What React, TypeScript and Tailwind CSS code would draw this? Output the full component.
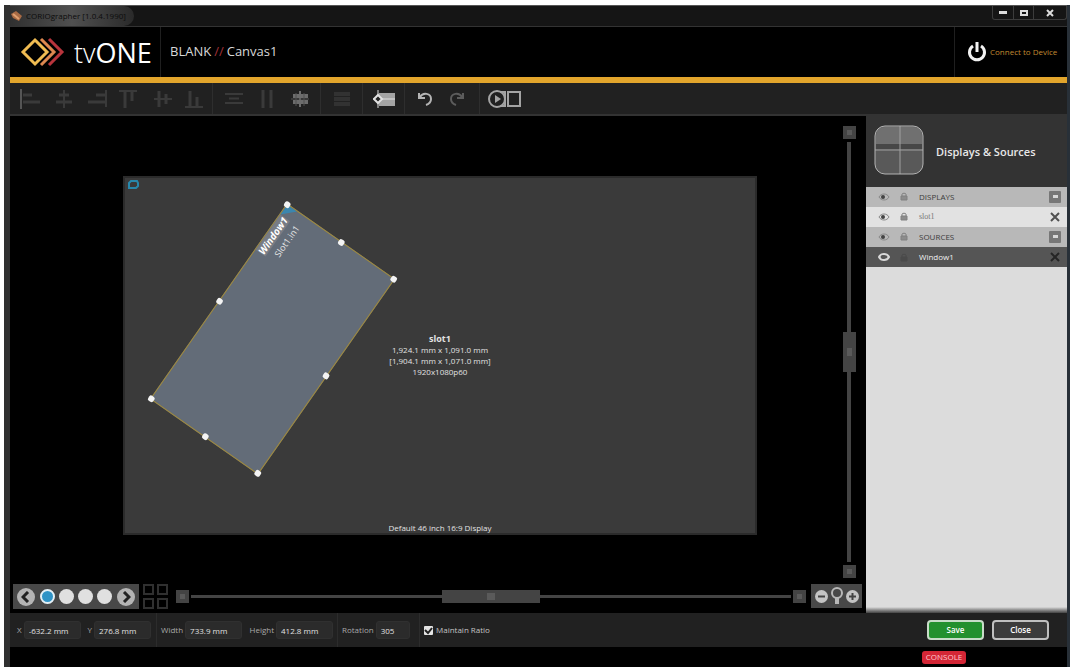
import type { ReactNode } from 'react';
import clsx from 'clsx';

const handles = [
  '-left-[3px] -top-[3px]',
  'left-[116px] -top-[3px]',
  '-right-[3px] -top-[3px]',
  '-left-[3px] -bottom-[3px]',
  'left-[116px] -bottom-[3px]',
  '-right-[3px] -bottom-[3px]',
  '-left-[3px] top-[63px]',
  '-right-[3px] top-[63px]',
];

function Tool({ label, color, wide, children }: { label: string; color: string; wide?: boolean; children: ReactNode }) {
  return (
    <button aria-label={label} className={clsx('flex h-full items-center justify-center', wide ? 'w-10' : 'w-[33px]', color)}>
      <svg
        width={wide ? 34 : 22}
        height="20"
        viewBox={wide ? '0 0 34 20' : '0 0 22 20'}
        fill="none"
        stroke="currentColor"
        strokeWidth="2"
      >
        {children}
      </svg>
    </button>
  );
}

function Toolbar() {
  const dim = 'text-[#3a3a3a]';
  const group = 'flex h-full border-r border-[#2e2e2e] px-1';
  return (
    <div className="flex h-[33px] items-center border-b-2 border-[#333] bg-[#212121]">
      <div className="flex h-full border-r border-[#2e2e2e] pl-1">
        <Tool label="Align left" color={dim}>
          <path d="M1 0v20" stroke="#555" />
          <path d="M3 6h9M3 13h17" strokeWidth="3" />
        </Tool>
        <Tool label="Align center" color={dim}>
          <path d="M11 1v18" />
          <path d="M6 6h10M3 13h16" strokeWidth="3" />
        </Tool>
        <Tool label="Align right" color={dim}>
          <path d="M20 1v17" />
          <path d="M10 6h9M2 13h17" strokeWidth="3" />
        </Tool>
        <Tool label="Align top" color={dim}>
          <path d="M0 2h18" />
          <path d="M6 3v16M13 3v9" strokeWidth="3" />
        </Tool>
        <Tool label="Align middle" color={dim}>
          <path d="M2 10h18" />
          <path d="M7 2v16M14 5v10" strokeWidth="3" />
        </Tool>
        <Tool label="Align bottom" color={dim}>
          <path d="M0 18h18" />
          <path d="M5 2v15M12 8v9" strokeWidth="3" />
        </Tool>
      </div>
      <div className={group}>
        <Tool label="Match width" color={dim}>
          <path d="M2 5h18M2 14h18M6 9.5h10" />
        </Tool>
        <Tool label="Match height" color={dim}>
          <path d="M7 1v18M15 1v18" strokeWidth="3" />
        </Tool>
        <Tool label="Match size" color="text-[#6c6c6c]">
          <path d="M4 7h15M4 13h15" strokeWidth="4" />
          <path d="M11 2v16" />
          <path d="M2 10h18M7 4v13M15 4v13" stroke="#505050" strokeWidth="1" />
        </Tool>
      </div>
      <div className={group}>
        <Tool label="Tile" color="text-[#323232]">
          <path d="M3 5h16M3 10h16M3 15h16" strokeWidth="4" />
        </Tool>
      </div>
      <div className={group}>
        <Tool label="Snap" color="text-[#e0e0e0]">
          <path d="M6 4h16v13H6z" fill="#a4a4a4" stroke="none" />
          <path d="M5 1v18M0 10h22" strokeWidth="1" />
          <path d="M1 10l4-4 4 4-4 4z" fill="#212121" />
        </Tool>
      </div>
      <div className={group}>
        <Tool label="Undo" color="text-[#b4b4b4]">
          <path d="M4 4v5h6M5 8c3-5 11-4 11 2 0 3-2 5-5 6" />
        </Tool>
        <Tool label="Redo" color="text-[#5c5c5c]">
          <path d="M15 4v5H9M14 8C11 3 3 4 3 10c0 3 2 5 5 6" />
        </Tool>
      </div>
      <div className="flex h-full pl-1">
        <Tool label="Preview" color="text-[#a4a4a4]" wide>
          <circle cx="10" cy="10" r="8" />
          <path d="M8 6l6 4-6 4z" fill="currentColor" stroke="none" />
          <path d="M13 3h5v14h-5M21 3h12v14H21z" />
        </Tool>
      </div>
    </div>
  );
}

function Header() {
  return (
    <header className="flex h-[50px] items-stretch bg-black">
      <div className="flex w-[151px] items-center border-r border-[#1f1f1f] pl-[10px]">
        <svg width="46" height="30" viewBox="0 0 46 30" fill="none" strokeWidth="3">
          <path d="M29 2l13 13-13 13" stroke="#b8343c" />
          <path d="M21 2l13 13-13 13" stroke="#dd8850" />
          <path d="M15 3l12 12-12 12L3 15z" stroke="#f0bc52" />
        </svg>
        <span className="pl-2 text-[27px] leading-none text-white">
          <span className="font-light">tv</span>ONE
        </span>
      </div>
      <div className="flex flex-1 items-center gap-[3px] pl-[9px] text-[13px] text-[#d8d8d8]">
        <span>BLANK</span>
        <span className="text-[#a03038]">//</span>
        <span>Canvas1</span>
      </div>
      <button className="flex w-[113px] items-center gap-[3px] border-l border-[#1f1f1f] pl-3 text-[8px] text-[#c08a30]">
        <svg width="20" height="22" viewBox="0 0 20 22" fill="none" stroke="#f2f2f2" strokeWidth="3">
          <path d="M6 5a7.500 7.500 0 1 0 8 0M10 1v10" />
        </svg>
        <span className="whitespace-nowrap">Connect to Device</span>
      </button>
    </header>
  );
}

function ScrollButton({ label }: { label: string }) {
  return (
    <button aria-label={label} className="flex size-[13px] shrink-0 items-center justify-center bg-[#444]">
      <span className="size-[5px] bg-[#5a5a5a]" />
    </button>
  );
}

function SourceWindow() {
  return (
    <div className="absolute left-[28px] top-[95px] flex h-[132px] w-[239px] -rotate-[55deg] flex-col items-end gap-1 border border-[#a08a3c] bg-[#636c78] pr-3">
      <span className="bg-[#787c84] text-[10px] font-bold italic leading-3 text-white">Window1</span>
      <span className="text-[9px] leading-[9px] text-[#e4e4e4]">Slot1.in1</span>
      <svg className="absolute right-0 top-0" width="12" height="12" viewBox="0 0 12 12">
        <path d="M0 0h12v12z" fill="#3b86ae" />
      </svg>
      {handles.map((place) => (
        <span key={place} className={clsx('absolute size-[6px] rounded-[2px] bg-[#f4f4f4]', place)} />
      ))}
    </div>
  );
}

function Stage() {
  return (
    <div className="flex flex-1">
      <div className="flex flex-1 flex-col pl-[113px] pr-20 pt-[60px]">
        <div className="relative flex h-[359px] flex-col items-center border-2 border-[#2b2b2b] bg-[#3a3a3a] text-[8px] leading-[11px] text-[#e2e2e2]">
          <svg className="absolute left-[2px] top-[2px]" width="12" height="10" viewBox="0 0 12 10" fill="none">
            <path d="M2 3l2-2h6l1 2v3L9 8H2z" stroke="#2788ac" strokeWidth="2" />
          </svg>
          <div className="flex flex-1 flex-col items-center justify-center pt-[10px]">
            <strong className="text-[9px]">slot1</strong>
            <span>1,924.1 mm x 1,091.0 mm</span>
            <span>[1,904.1 mm x 1,071.0 mm]</span>
            <span>1920x1080p60</span>
          </div>
          <span>Default 46 inch 16:9 Display</span>
          <SourceWindow />
        </div>
      </div>
      <div className="flex w-6 flex-col items-center pb-[6px] pt-[10px]">
        <ScrollButton label="Scroll up" />
        <input
          type="range"
          aria-label="Vertical scroll"
          defaultValue={50}
          className="m-0 min-h-0 w-[13px] flex-1 appearance-none bg-[linear-gradient(#444,#444)] bg-[length:4px_calc(100%-6px)] bg-center bg-no-repeat [writing-mode:vertical-lr] [&::-webkit-slider-thumb]:h-10 [&::-webkit-slider-thumb]:w-[13px] [&::-webkit-slider-thumb]:appearance-none [&::-webkit-slider-thumb]:bg-[#444] [&::-webkit-slider-thumb]:bg-[linear-gradient(#5a5a5a,#5a5a5a)] [&::-webkit-slider-thumb]:bg-[length:5px_8px] [&::-webkit-slider-thumb]:bg-center [&::-webkit-slider-thumb]:bg-no-repeat"
        />
        <ScrollButton label="Scroll down" />
      </div>
      <div className="w-[5px]" />
    </div>
  );
}

function PageArrow({ label, d }: { label: string; d: string }) {
  return (
    <button aria-label={label} className="flex size-[18px] items-center justify-center rounded-full bg-[#b4b4b4]">
      <svg width="10" height="12" viewBox="0 0 10 12" fill="none" stroke="#222" strokeWidth="3">
        <path d={d} />
      </svg>
    </button>
  );
}

function StageFooter() {
  return (
    <div className="flex h-[29px] items-start pl-[3px] pr-1">
      <div className="flex h-[25px] w-[126px] items-center justify-between bg-[#484848] px-1">
        <PageArrow label="Previous preset" d="M7 1L2 6l5 5" />
        <div className="flex gap-1">
          <button aria-label="Preset 1" className="size-[15px] rounded-full border-2 border-[#e4f0f6] bg-[#2f93c6]" />
          <button aria-label="Preset 2" className="size-[15px] rounded-full bg-[#e0e0e0]" />
          <button aria-label="Preset 3" className="size-[15px] rounded-full bg-[#e0e0e0]" />
          <button aria-label="Preset 4" className="size-[15px] rounded-full bg-[#e0e0e0]" />
        </div>
        <PageArrow label="Next preset" d="M3 1l5 5-5 5" />
      </div>
      <button aria-label="All presets" className="ml-1 grid grid-cols-2 gap-[3px]">
        <span className="size-[11px] border-2 border-[#303030]" />
        <span className="size-[11px] border-2 border-[#303030]" />
        <span className="size-[11px] border-2 border-[#303030]" />
        <span className="size-[11px] border-2 border-[#303030]" />
      </button>
      <div className="flex h-[25px] flex-1 items-center pl-2">
        <ScrollButton label="Scroll left" />
        <input
          type="range"
          aria-label="Horizontal scroll"
          defaultValue={50}
          className="m-0 h-[13px] min-w-0 flex-1 appearance-none bg-[linear-gradient(#444,#444)] bg-[length:calc(100%-4px)_3px] bg-center bg-no-repeat [&::-webkit-slider-thumb]:h-[13px] [&::-webkit-slider-thumb]:w-[98px] [&::-webkit-slider-thumb]:appearance-none [&::-webkit-slider-thumb]:bg-[#444] [&::-webkit-slider-thumb]:bg-[linear-gradient(#5a5a5a,#5a5a5a)] [&::-webkit-slider-thumb]:bg-[length:8px_7px] [&::-webkit-slider-thumb]:bg-center [&::-webkit-slider-thumb]:bg-no-repeat"
        />
        <ScrollButton label="Scroll right" />
      </div>
      <div className="ml-[5px] flex h-6 w-[51px] items-center justify-center gap-[3px] bg-[#484848]">
        <button aria-label="Zoom out">
          <svg width="13" height="13" viewBox="0 0 13 13">
            <circle cx="6.500" cy="6.500" r="6.500" fill="#c4c4c4" />
            <path d="M3 6.500h7" stroke="#444" strokeWidth="2" />
          </svg>
        </button>
        <button aria-label="Reset zoom">
          <svg width="12" height="18" viewBox="0 0 12 18" fill="none" stroke="#b8b8b8">
            <circle cx="6" cy="6" r="5" strokeWidth="2" />
            <path d="M6 11v6" strokeWidth="4" />
          </svg>
        </button>
        <button aria-label="Zoom in">
          <svg width="13" height="13" viewBox="0 0 13 13">
            <circle cx="6.500" cy="6.500" r="6.500" fill="#c4c4c4" />
            <path d="M3 6.500h7M6.500 3v7" stroke="#444" strokeWidth="2" />
          </svg>
        </button>
      </div>
    </div>
  );
}

interface RowProps {
  name: string;
  kind: 'section' | 'item' | 'selected';
}

function Row({ name, kind }: RowProps) {
  const selected = kind === 'selected';
  return (
    <div
      className={clsx(
        'flex h-5 items-center pl-3 pr-[6px] text-[8px]',
        kind === 'section' && 'bg-[#b8b8b8] text-[#3c3c3c]',
        kind === 'item' && 'bg-[#e2e2e2] text-[#777]',
        selected && 'bg-[#555] text-[#f0f0f0]',
      )}
    >
      <button aria-label={`Toggle ${name}`}>
        <svg width="12" height="8" viewBox="0 0 12 8" fill="none" stroke={selected ? '#d8d8d8' : '#888'}>
          <path d="M1 4c2-4 8-4 10 0-2 4-8 4-10 0z" strokeWidth={selected ? 2 : 1} />
          <circle cx="5" cy="4" r="2" fill={selected ? '#555' : '#444'} stroke="none" />
        </svg>
      </button>
      <button aria-label={`Lock ${name}`} className="ml-[10px]">
        <svg width="8" height="9" viewBox="0 0 8 9" fill="none" stroke={selected ? '#4a4a4a' : '#808080'}>
          <path d="M2 4V2c0-1 4-1 4 0v2" />
          <path d="M1 4h6v4H1z" fill={selected ? '#4a4a4a' : '#8c8c8c'} />
        </svg>
      </button>
      <span className={clsx('ml-[11px] flex-1', kind === 'item' && "font-['Liberation_Serif',serif]")}>{name}</span>
      {kind === 'section' ? (
        <button aria-label={`Collapse ${name}`} className="flex size-3 items-center justify-center rounded-[1px] bg-[#777]">
          <span className="h-[3px] w-[5px] bg-[#d8d8d8]" />
        </button>
      ) : (
        <button aria-label={`Remove ${name}`} className="flex size-3 items-center justify-center">
          <svg width="10" height="10" viewBox="0 0 10 10" stroke={selected ? '#252525' : '#505050'} strokeWidth="2">
            <path d="M1 1l8 8M9 1L1 9" />
          </svg>
        </button>
      )}
    </div>
  );
}

function Sidebar() {
  return (
    <aside className="flex w-[201px] flex-col bg-[#dcdcdc]">
      <div className="flex h-[71px] items-start gap-3 bg-[#333] pl-2 pt-[9px]">
        <svg width="50" height="50" viewBox="0 0 50 50">
          <rect x="1" y="1" width="48" height="48" rx="10" fill="#595959" />
          <path d="M2 19V11Q2 2 11 2h28q9 0 9 9v8z" fill="#707070" />
          <path d="M2 19h46v5H2z" fill="#474747" />
          <path d="M26 1v48M1 25h48" stroke="#a0a0a0" />
          <rect x="1" y="1" width="48" height="48" rx="10" fill="none" stroke="#b4b4b4" strokeWidth="1" />
        </svg>
        <h2 className="pt-[19px] text-[11px] font-semibold leading-4 text-[#e8e8e8]">Displays &amp; Sources</h2>
      </div>
      <div className="flex flex-col divide-y divide-transparent">
        <Row name="DISPLAYS" kind="section" />
        <Row name="slot1" kind="item" />
        <Row name="SOURCES" kind="section" />
        <Row name="Window1" kind="selected" />
      </div>
      <div className="mt-auto h-[6px] bg-linear-to-b from-[#dcdcdc] to-[#444]" />
    </aside>
  );
}

function Field({ label, value, short }: { label: string; value: string; short?: boolean }) {
  return (
    <label className="flex items-center gap-[2px] text-[#a8a8a8]">
      {label}
      <input
        defaultValue={value}
        className={clsx(
          'h-[18px] rounded-[3px] border border-[#303030] bg-[#2b2b2b] pl-1 text-[8px] text-[#e0e0e0] outline-none',
          short ? 'w-[34px]' : 'w-[57px]',
        )}
      />
    </label>
  );
}

function PropertyBar() {
  return (
    <div className="flex h-[34px] items-center bg-[#212121] text-[8px]">
      <div className="flex h-full w-[147px] items-center justify-between border-r border-[#2c2c2c] pl-[7px] pr-[5px]">
        <Field label="X" value="-632.2 mm" />
        <Field label="Y" value="276.8 mm" />
      </div>
      <div className="flex h-full w-[181px] items-center justify-between border-r border-[#2c2c2c] px-1">
        <Field label="Width" value="733.9 mm" />
        <Field label="Height" value="412.8 mm" />
      </div>
      <div className="flex h-full w-[82px] items-center border-r border-[#2c2c2c] pl-1">
        <Field label="Rotation" value="305" short />
      </div>
      <label className="flex flex-1 items-center gap-[3px] pl-1 text-[#c4c4c4]">
        <span className="grid">
          <input
            type="checkbox"
            defaultChecked
            className="peer col-start-1 row-start-1 m-0 size-[9px] appearance-none rounded-[1px] bg-[#e4e4e4]"
          />
          <svg
            className="pointer-events-none invisible col-start-1 row-start-1 peer-checked:visible"
            width="9"
            height="9"
            viewBox="0 0 9 9"
            fill="none"
            stroke="#222"
            strokeWidth="2"
          >
            <path d="M1 4l3 3 4-5" />
          </svg>
        </span>
        Maintain Ratio
      </label>
      <div className="flex gap-2 pr-[18px] text-white">
        <button className="h-5 w-[57px] rounded-[4px] border-2 border-[#c8dcc8] bg-[#23912e] font-semibold leading-none">Save</button>
        <button className="h-5 w-[57px] rounded-[4px] border-2 border-[#c0c0c0] bg-[#3c3c3c] font-semibold leading-none">Close</button>
      </div>
    </div>
  );
}

export default function App() {
  return (
    <div className="flex min-h-screen flex-col bg-white pl-1 pt-[5px] font-['Open_Sans','Noto_Sans',sans-serif]">
      <div className="flex flex-1 flex-col border-l-[6px] border-r-[3px] border-l-[#303030] border-r-[#283038] bg-black">
        <div className="flex h-[22px] items-start justify-between border-b border-t border-b-[#333] border-t-[#555] bg-[#151515]">
          <div className="flex h-5 items-center gap-[3px] rounded-r-full bg-linear-to-r from-[#303030] via-[#505050] to-[#2a2a2a] pr-2 text-[8px] text-[#0c0c0c]">
            <svg width="13" height="12" viewBox="0 0 13 12">
              <path d="M1 4l5-3 6 5-3 5-6-3z" fill="#a96b45" />
              <path d="M3 4l6 5" stroke="#e0a070" strokeWidth="2" />
            </svg>
            CORIOgrapher [1.0.4.1990]
          </div>
          <div className="flex h-[14px] rounded-b-[3px] border border-t-0 border-[#3c3c3c] text-[#d8d8d8]">
            <button aria-label="Minimize" className="flex w-[21px] items-center justify-center border-r border-[#3c3c3c]">
              <span className="h-[3px] w-2 bg-[#ddd]" />
            </button>
            <button aria-label="Maximize" className="flex w-5 items-center justify-center border-r border-[#3c3c3c]">
              <span className="h-[6px] w-2 border-2 border-[#ddd]" />
            </button>
            <button aria-label="Close window" className="flex w-8 items-center justify-center">
              <svg width="8" height="8" viewBox="0 0 8 8" stroke="#ddd" strokeWidth="2">
                <path d="M1 1l6 6M7 1L1 7" />
              </svg>
            </button>
          </div>
        </div>
        <Header />
        <div className="h-[6px] bg-[#e2a52c]" />
        <Toolbar />
        <main className="flex flex-1">
          <div className="flex flex-1 flex-col">
            <Stage />
            <StageFooter />
          </div>
          <Sidebar />
        </main>
        <PropertyBar />
        <div className="flex h-[20px] items-center justify-end pr-[101px]">
          <button className="h-[13px] w-11 rounded-[3px] bg-[#d42636] text-[8px] leading-none text-[#ffc8cc]">CONSOLE</button>
        </div>
      </div>
    </div>
  );
}
